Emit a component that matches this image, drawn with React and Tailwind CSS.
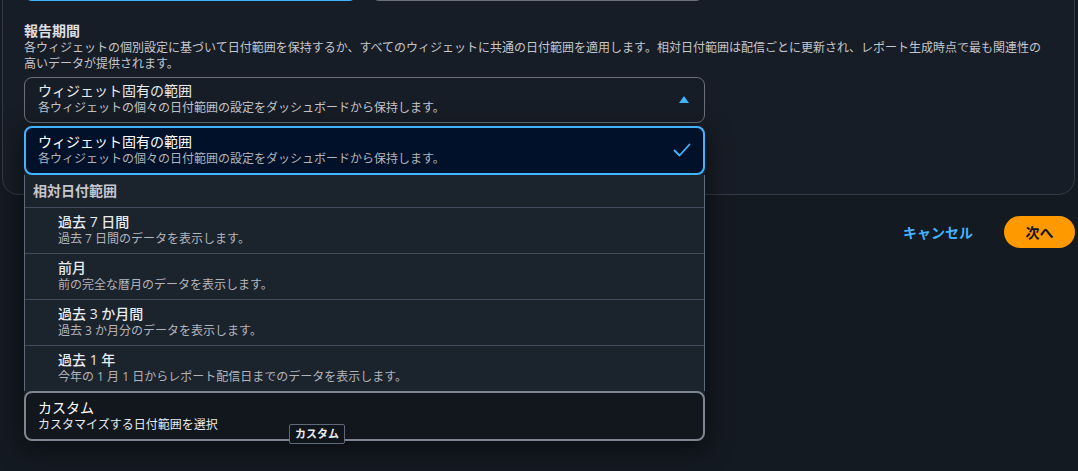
import React from 'react';

const options = [
    { title: '過去 7 日間', desc: '過去 7 日間のデータを表示します。' },
    { title: '前月', desc: '前の完全な暦月のデータを表示します。' },
    { title: '過去 3 か月間', desc: '過去 3 か月分のデータを表示します。' },
    { title: '過去 1 年', desc: '今年の 1 月 1 日からレポート配信日までのデータを表示します。' },
];

function CaretUp() {
    return (
        <svg width="10" height="7" viewBox="0 0 10 7">
            <path d="M5 0 L10 7 L0 7 Z" fill="#42b4ff" />
        </svg>
    );
}

function Check() {
    return (
        <svg width="18" height="14" viewBox="0 0 18 14" fill="none">
            <path d="M1.5 7.5 L6.5 12.5 L16.5 1.5" stroke="#42b4ff" strokeWidth="1.8" strokeLinecap="round" strokeLinejoin="round" />
        </svg>
    );
}

export default function App() {
    return (
        <div className="h-[471px] w-[1078px] overflow-hidden bg-[#141a22] font-['Open_Sans','Noto_Sans_CJK_JP',sans-serif]">
            {/* container panel */}
            <div className="ml-[2px] -mt-[34px] w-[1073px] rounded-b-2xl border border-[#343b47] bg-[#171d26] px-[21px] pb-[71px]">
                <div className="flex h-[34px]">
                    <div className="w-[333px] rounded-lg border-2 border-[#42b4ff]" />
                    <div className="ml-[14px] w-[333px] rounded-lg border border-[#6b7079]" />
                </div>

                <div className="mt-[21px] text-[14px] font-bold leading-[18px] text-[#dedee3]">報告期間</div>
                <div className="w-[1020px] text-[12px] leading-[16px] text-[#c6c6cd]">
                    各ウィジェットの個別設定に基づいて日付範囲を保持するか、すべてのウィジェットに共通の日付範囲を適用します。相対日付範囲は配信ごとに更新され、レポート生成時点で最も関連性の高いデータが提供されます。
                </div>

                <div className="relative mt-[5px] w-[681px]">
                    {/* trigger */}
                    <div className="flex items-center rounded-lg border border-[#6b7079] pl-[13px] pr-[15px] pt-[4px] pb-[6px]">
                        <div className="flex-1">
                            <div className="text-[14px] leading-[18px] text-[#e9ebed]">ウィジェット固有の範囲</div>
                            <div className="text-[12px] leading-[16px] text-[#c6c6cd]">各ウィジェットの個々の日付範囲の設定をダッシュボードから保持します。</div>
                        </div>
                        <CaretUp />
                    </div>

                    {/* dropdown */}
                    <div className="absolute left-0 right-0 top-[calc(100%+3px)] z-10 rounded-lg bg-[#1b232d] shadow-[0_6px_24px_2px_rgba(0,0,0,0.5)]">
                        <div className="flex items-center rounded-lg border-2 border-[#42b4ff] bg-[#001129] pl-[12px] pr-[12px] pt-[5px] pb-[6px]">
                            <div className="flex-1">
                                <div className="text-[14px] leading-[18px] text-[#ffffff]">ウィジェット固有の範囲</div>
                                <div className="text-[12px] leading-[16px] text-[#b4b4bb]">各ウィジェットの個々の日付範囲の設定をダッシュボードから保持します。</div>
                            </div>
                            <Check />
                        </div>

                        <div className="border-x border-[#5f6b7a]">
                            <div className="py-[7px] pl-[8px] text-[14px] font-bold leading-[18px] text-[#c6c6cd]">相対日付範囲</div>
                            {options.map(o => (
                                <div key={o.title} className="border-t border-[#414d5c] pl-[33px] pt-[5px] pb-[6px]">
                                    <div className="text-[14px] font-medium leading-[18px] text-[#e9ebed]">{o.title}</div>
                                    <div className="text-[12px] leading-[16px] text-[#b4b4bb]">{o.desc}</div>
                                </div>
                            ))}
                        </div>

                        <div className="relative rounded-lg border-2 border-[#7d8590] bg-[#12171e] pl-[12px] pt-[6px] pb-[6px]">
                            <div className="text-[14px] leading-[18px] text-[#ffffff]">カスタム</div>
                            <div className="text-[12px] leading-[16px] text-[#e9ebed]">カスタマイズする日付範囲を選択</div>
                        </div>

                        <div className="absolute left-[265px] top-[298px] flex h-[20px] items-center rounded-[2px] border border-[#5f6b7a] bg-[#10151b] px-[5px] text-[11px] font-bold text-[#e9ebed]">
                            カスタム
                        </div>
                    </div>
                </div>
            </div>

            {/* actions */}
            <div className="ml-[2px] mt-[21px] flex w-[1073px] items-center justify-end">
                <span className="mr-[31px] text-[14px] font-bold text-[#42b4ff]">キャンセル</span>
                <button className="flex h-[32px] w-[71px] items-center justify-center rounded-full bg-[#ff9900] text-[14px] font-bold text-[#0f141a]">
                    次へ
                </button>
            </div>
        </div>
    );
}
